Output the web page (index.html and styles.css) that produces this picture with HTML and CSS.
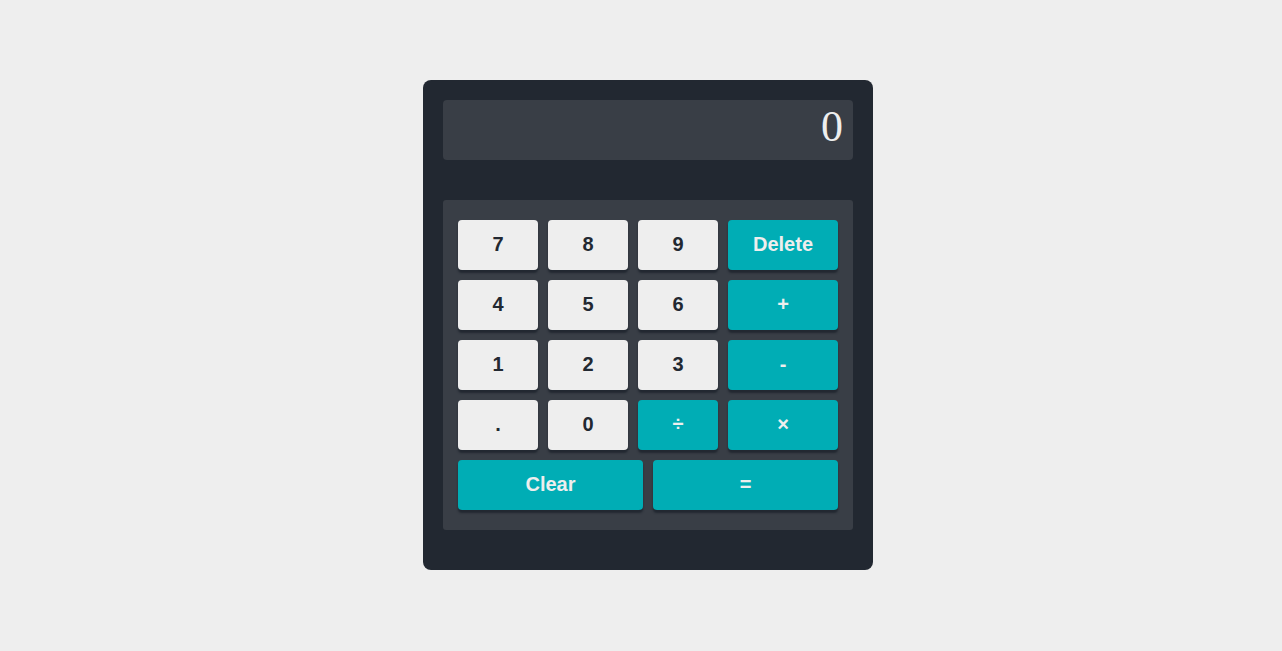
FILE: index.html
```html
<!DOCTYPE html>
<html>
<head>
<meta charset="utf-8">
<link rel="stylesheet" href="styles.css">
</head>
<body>
<div class="page">
  <div class="calc">
    <div class="display">0</div>
    <div class="keypad">
      <div class="grid">
        <button class="key">7</button>
        <button class="key">8</button>
        <button class="key">9</button>
        <button class="key op">Delete</button>
        <button class="key">4</button>
        <button class="key">5</button>
        <button class="key">6</button>
        <button class="key op">+</button>
        <button class="key">1</button>
        <button class="key">2</button>
        <button class="key">3</button>
        <button class="key op">-</button>
        <button class="key">.</button>
        <button class="key">0</button>
        <button class="key op">÷</button>
        <button class="key op">×</button>
      </div>
      <div class="bottom">
        <button class="key op">Clear</button>
        <button class="key op">=</button>
      </div>
    </div>
  </div>
</div>
</body>
</html>
```
FILE: styles.css
```css
html, body {
  margin: 0;
  padding: 0;
  background: #eeeeee;
}
.page {
  height: 651px;
  display: flex;
  justify-content: center;
  padding-top: 80px;
  padding-left: 14px;
  box-sizing: border-box;
}
.calc {
  width: 450px;
  height: 490px;
  box-sizing: border-box;
  background: #222831;
  border-radius: 8px;
  padding: 20px;
  display: flex;
  flex-direction: column;
  gap: 40px;
}
.display {
  height: 60px;
  background: #393e46;
  border-radius: 4px;
  color: #eeeeee;
  font-family: "Liberation Serif", serif;
  font-size: 44px;
  line-height: 54px;
  text-align: right;
  padding-right: 10px;
}
.keypad {
  background: #393e46;
  border-radius: 3px;
  padding: 20px 15px;
  display: flex;
  flex-direction: column;
  gap: 10px;
}
.grid {
  display: grid;
  grid-template-columns: 80px 80px 80px 110px;
  grid-auto-rows: 50px;
  gap: 10px;
}
.bottom {
  display: grid;
  grid-template-columns: 1fr 1fr;
  grid-auto-rows: 50px;
  gap: 10px;
}
.key {
  border: none;
  margin: 0;
  padding: 0 0 2px;
  border-radius: 4px;
  background: #eeeeee;
  color: #222831;
  font-family: "Liberation Sans", Arial, sans-serif;
  font-weight: bold;
  font-size: 20px;
  box-shadow: 0 3px 2px #222831;
}
.key.op {
  background: #00adb5;
  color: #eeeeee;
}
```
